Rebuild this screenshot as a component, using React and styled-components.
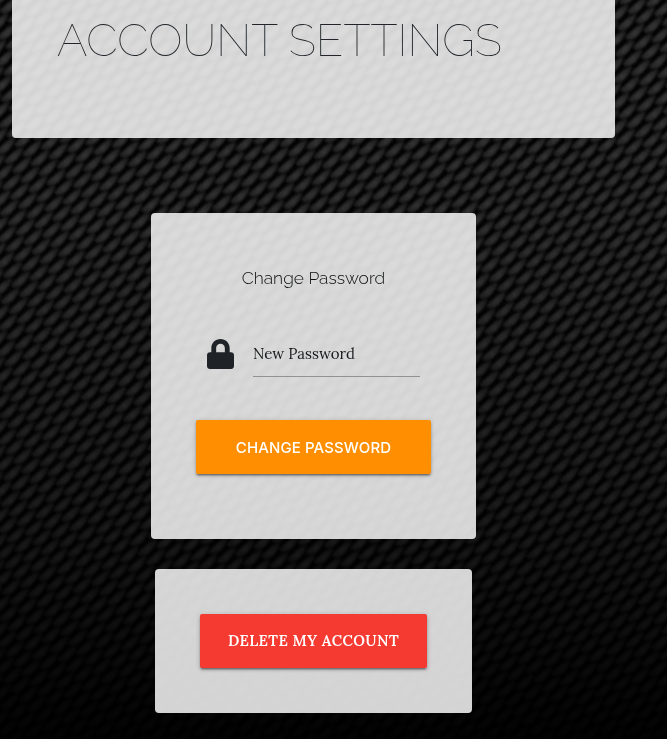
import React from "react";
import styled, { createGlobalStyle } from "styled-components";

const GlobalStyle = createGlobalStyle`
  * { box-sizing: border-box; }
  body { margin: 0; background: #000; overflow: hidden; }
`;

const Page = styled.div`
  position: relative;
  width: 667px;
  height: 739px;
  overflow: hidden;
`;

const Weave = styled.svg`
  position: absolute;
  inset: 0;
  display: block;
`;

const Content = styled.main`
  position: relative;
  width: 627px;
  display: flex;
  flex-direction: column;
  align-items: center;
`;

const Card = styled.section`
  width: ${(p) => p.$width}px;
  height: ${(p) => p.$height}px;
  margin-top: ${(p) => p.$gap || 0}px;
  border-radius: ${(p) => (p.$flush ? "0 0 4px 4px" : "4px")};
  background: rgba(249, 249, 249, 0.85);
  display: flex;
  flex-direction: column;
  align-items: ${(p) => (p.$flush ? "flex-start" : "center")};
`;

const Title = styled.h1`
  margin: 13px 0 0 45px;
  font: 100 45px/56px Raleway, Lato, "Open Sans", sans-serif;
  color: #212529;
  text-transform: uppercase;
  white-space: nowrap;
`;

const Subtitle = styled.h2`
  margin: 53px 0 0;
  font: 300 17.4px/24px Raleway, "Open Sans", sans-serif;
  color: #0c0e10;
`;

const Field = styled.label`
  display: flex;
  width: 213px;
  height: 51px;
  margin-top: 36px;
`;

const LockIcon = styled.svg`
  width: 27px;
  height: 30px;
  margin-top: 13px;
  margin-right: 19px;
`;

const Input = styled.input`
  flex: 1;
  min-width: 0;
  padding: 5px 0 1px;
  border: 0;
  border-bottom: 1px solid #929292;
  border-radius: 0;
  background: transparent;
  font: 15px Lora, "Liberation Serif", serif;
  color: #16191c;
  outline: 0;
  &::placeholder { color: #16191c; opacity: 1; }
`;

const Button = styled.button`
  width: ${(p) => p.$width}px;
  height: 54px;
  margin-top: ${(p) => p.$gap}px;
  padding: ${(p) => (p.$raised ? "0 0 2px" : "0")};
  border: 0;
  border-radius: 2px;
  background: ${(p) => p.$color};
  color: #fff;
  font: ${(p) => p.$font};
  letter-spacing: ${(p) => p.$spacing}px;
  text-transform: uppercase;
  box-shadow: 0 2px 2px rgba(0, 0, 0, 0.24), 0 3px 1px -2px rgba(0, 0, 0, 0.2), 0 1px 5px rgba(0, 0, 0, 0.2);
`;

const strands = [];
for (let a = -60; a < 110; a += 1) {
  for (let b = -60; b < 150; b += 1) {
    const x = a * 18.3 + b * 8;
    const y = b * 9.6 - a * 7;
    if (x > -25 && x < 675 && y > -20 && y < 745) strands.push({ x, y });
  }
}

export default function App() {
  return (
    <Page>
      <GlobalStyle />
      <Weave width="667" height="739" aria-hidden="true">
        <defs>
          <linearGradient id="thread" x1="0" y1="1" x2="1" y2="0">
            <stop offset="0" stopColor="#1e1e1e" />
            <stop offset="0.45" stopColor="#353535" />
            <stop offset="1" stopColor="#1c1c1c" />
          </linearGradient>
          <filter id="soft" x="0" y="0" width="1" height="1">
            <feGaussianBlur stdDeviation="1" />
          </filter>
          <linearGradient id="fade" x1="0" y1="0" x2="0" y2="1">
            <stop offset="0" stopColor="#000" stopOpacity="0" />
            <stop offset="0.3" stopColor="#000" stopOpacity="0.08" />
            <stop offset="0.68" stopColor="#000" stopOpacity="0.45" />
            <stop offset="1" stopColor="#000" stopOpacity="0.93" />
          </linearGradient>
        </defs>
        <rect width="667" height="739" fill="#060606" />
        <g filter="url(#soft)" fill="url(#thread)">
          {strands.map(({ x, y }) => (
            <path
              key={`${x},${y}`}
              transform={`translate(${x} ${y})`}
              d="M0 12C0 8 4 7 7 4C10 1 13 -2 19 -3C18 1 16 5 13 8C10 12 3 16 0 12Z"
            />
          ))}
        </g>
        <rect width="667" height="739" fill="url(#fade)" />
      </Weave>
      <Content>
        <Card $width={603} $height={138} $flush>
          <Title>Account Settings</Title>
        </Card>
        <Card $width={325} $height={326} $gap={75}>
          <Subtitle>Change Password</Subtitle>
          <Field>
            <LockIcon viewBox="0 0 448 512" preserveAspectRatio="none" fill="#1f2327" aria-hidden="true">
              <path d="M400 224h-24v-72C376 68.2 307.8 0 224 0S72 68.2 72 152v72H48c-26.500 0-48 21.500-48 48v192c0 26.500 21.500 48 48 48h352c26.500 0 48-21.500 48-48V272c0-26.500-21.500-48-48-48zm-104 0H152v-72c0-39.700 32.300-72 72-72s72 32.300 72 72v72z" />
            </LockIcon>
            <Input type="password" placeholder="New Password" />
          </Field>
          <Button $width={235} $gap={43} $color="#ff8f00" $font="500 15px Inter, sans-serif" $spacing={0.1}>
            Change Password
          </Button>
        </Card>
        <Card $width={317} $height={144} $gap={30}>
          <Button $width={227} $gap={45} $color="#f43a31" $font='600 15px Lora, "Liberation Serif", serif' $spacing={0.4} $raised>
            Delete my account
          </Button>
        </Card>
      </Content>
    </Page>
  );
}
